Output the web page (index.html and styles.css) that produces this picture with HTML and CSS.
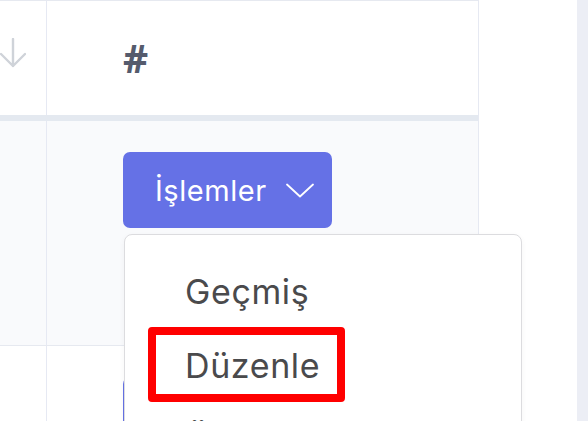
FILE: index.html
```html
<!DOCTYPE html>
<html lang="tr">
<head>
<meta charset="utf-8">
<title>İşlemler</title>
<link rel="stylesheet" href="styles.css">
</head>
<body>
<div class="page">
  <div class="table">
    <div class="row head">
      <div class="cell c1">
        <svg class="sort" width="26" height="30" viewBox="0 0 26 30" aria-hidden="true">
          <path d="M13 1 V28 M1 16 L13 28 L25 16" fill="none" stroke="#cfd3d9" stroke-width="2.4" stroke-linecap="round" stroke-linejoin="round"/>
        </svg>
      </div>
      <div class="cell c2"><span class="hash">#</span></div>
    </div>
    <div class="row body r1">
      <div class="cell c1"></div>
      <div class="cell c2">
        <div class="actions">
          <button class="btn">İşlemler
            <svg class="chev" width="28" height="15" viewBox="0 0 28 15" aria-hidden="true"><path d="M1 1.5 L14 13.5 L27 1.5" fill="none" stroke="#fff" stroke-width="1.8" stroke-linecap="round" stroke-linejoin="round"/></svg>
          </button>
          <div class="menu">
            <div class="item">Geçmiş</div>
            <div class="item">Düzenle</div>
            <div class="item">Önizle</div>
            <div class="mark"></div>
          </div>
        </div>
      </div>
    </div>
    <div class="row body r2">
      <div class="cell c1"></div>
      <div class="cell c2">
        <button class="btn">İşlemler
          <svg class="chev" width="28" height="15" viewBox="0 0 28 15" aria-hidden="true"><path d="M1 1.5 L14 13.5 L27 1.5" fill="none" stroke="#fff" stroke-width="1.8" stroke-linecap="round" stroke-linejoin="round"/></svg>
        </button>
      </div>
    </div>
  </div>
  <div class="gap"></div>
  <div class="scroll"></div>
</div>
</body>
</html>
```
FILE: styles.css
```css
* { box-sizing: border-box; }
html, body { margin: 0; padding: 0; background: #fff; }
body { font-family: Inter, "Liberation Sans", sans-serif; }

.page {
  display: flex;
  width: 588px;
  height: 421px;
  overflow: hidden;
}

.table {
  width: 479px;
  flex: none;
  display: flex;
  flex-direction: column;
  border-top: 1px solid #e6e9f0;
  border-right: 1px solid #e6e9f2;
}

.row { display: flex; }
.head { flex: none; height: 120px; border-bottom: 6px solid #e4e9f0; background: #fff; }
.r1 { flex: none; height: 225px; border-bottom: 1px solid #e6e9f0; background: #f9fafc; }
.r2 { flex: 1; min-height: 0; background: #fff; }

.cell { display: flex; }
.c1 { width: 47px; border-right: 1px solid #e6e9f3; flex: none; }
.c2 { flex: 1; padding-left: 76px; }

.head .c1 { align-items: flex-start; padding-top: 37px; }
.head .c2 { align-items: center; padding-bottom: 1px; }

.hash {
  font-family: "Open Sans", sans-serif;
  font-weight: 700;
  font-size: 39px;
  color: #555b6d;
}

.body .c2 { padding-top: 31px; align-items: flex-start; }

.actions { position: relative; }

.btn {
  display: inline-flex;
  align-items: center;
  flex: none;
  height: 76px;
  padding: 0 18px 0 32px;
  border: none;
  border-radius: 7px;
  background: #6571e6;
  color: #fff;
  font-family: Inter, sans-serif;
  font-size: 29px;
  letter-spacing: 0.55px;
  gap: 19px;
}
.chev { display: block; }

.menu {
  position: absolute;
  top: calc(100% + 6px);
  left: 1px;
  width: 398px;
  height: 260px;
  padding: 20px 0 0 60px;
  background: #fff;
  border: 1px solid #dcdcdf;
  border-radius: 8px;
  box-shadow: 0 2px 6px rgba(0,0,0,0.04);
}

.item {
  height: 74px;
  line-height: 74px;
  font-size: 34px;
  letter-spacing: 0.6px;
  color: #4a4a4c;
}

.mark {
  position: absolute;
  left: 23px;
  top: 92px;
  width: 197px;
  height: 75px;
  border: 8px solid #ff0000;
  border-radius: 4px;
}

.gap { width: 98px; flex: none; }
.scroll { flex: 1; background: #eceef5; }
```
